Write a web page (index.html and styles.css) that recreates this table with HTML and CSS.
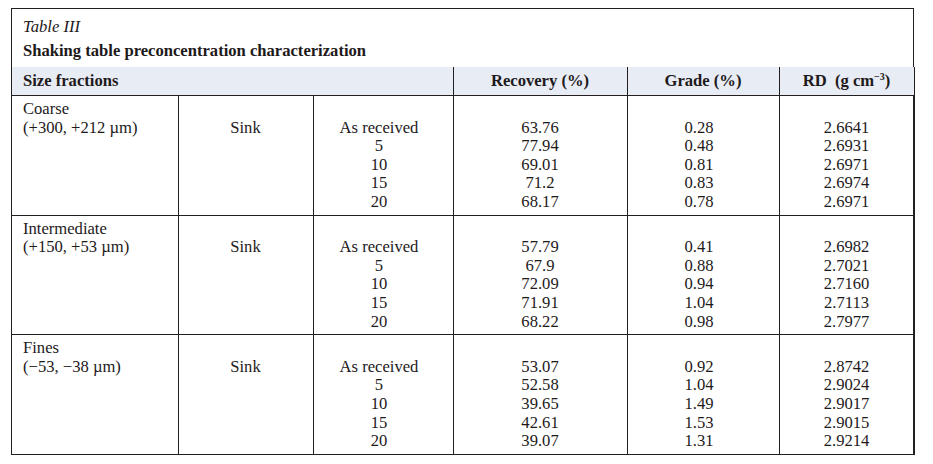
FILE: index.html
```html
<!DOCTYPE html>
<html>
<head>
<meta charset="utf-8">
<link rel="stylesheet" href="styles.css">
</head>
<body>
<div class="page">
  <div class="box">
    <div class="caption">
      <div class="label">Table III</div>
      <div class="title">Shaking table preconcentration characterization</div>
    </div>
    <table class="data">
      <colgroup>
        <col class="c1"><col class="c2"><col class="c3"><col class="c4"><col class="c5"><col class="c6">
      </colgroup>
      <thead>
        <tr>
          <th colspan="3" class="left">Size fractions</th>
          <th>Recovery (%)</th>
          <th>Grade (%)</th>
          <th>RD&nbsp; (g cm<sup>−3</sup>)</th>
        </tr>
      </thead>
      <tbody>
        <tr>
          <td class="left">Coarse<br>(+300, +212 µm)</td>
          <td><br>Sink</td>
          <td class="shift"><br>As received<br>5<br>10<br>15<br>20</td>
          <td><br>63.76<br>77.94<br>69.01<br>71.2<br>68.17</td>
          <td class="shift"><br>0.28<br>0.48<br>0.81<br>0.83<br>0.78</td>
          <td><br>2.6641<br>2.6931<br>2.6971<br>2.6974<br>2.6971</td>
        </tr>
        <tr>
          <td class="left">Intermediate<br>(+150, +53 µm)</td>
          <td><br>Sink</td>
          <td class="shift"><br>As received<br>5<br>10<br>15<br>20</td>
          <td><br>57.79<br>67.9<br>72.09<br>71.91<br>68.22</td>
          <td class="shift"><br>0.41<br>0.88<br>0.94<br>1.04<br>0.98</td>
          <td><br>2.6982<br>2.7021<br>2.7160<br>2.7113<br>2.7977</td>
        </tr>
        <tr>
          <td class="left">Fines<br>(−53, −38 µm)</td>
          <td><br>Sink</td>
          <td class="shift"><br>As received<br>5<br>10<br>15<br>20</td>
          <td><br>53.07<br>52.58<br>39.65<br>42.61<br>39.07</td>
          <td class="shift"><br>0.92<br>1.04<br>1.49<br>1.53<br>1.31</td>
          <td><br>2.8742<br>2.9024<br>2.9017<br>2.9015<br>2.9214</td>
        </tr>
      </tbody>
    </table>
  </div>
</div>
</body>
</html>
```

FILE: styles.css
```css
html, body {
  margin: 0;
  padding: 0;
  background: #ffffff;
}

body {
  font-family: "Liberation Serif", "Times New Roman", serif;
  color: #1e1a1b;
  font-size: 16.6px;
}

.page {
  padding: 8px 0 0 11px;
}

.box {
  width: 901px;
  border: 1px solid #231f20;
  border-bottom: none;
}

.caption {
  padding: 5px 0 0 11px;
  height: 53px;
}

.label {
  font-style: italic;
  line-height: 26px;
  height: 24px;
}

.title {
  font-weight: bold;
  line-height: 26px;
}

.data {
  width: 902px;
  margin-right: -1px;
  border-collapse: collapse;
  table-layout: fixed;
}

.c1 { width: 166px; }
.c2 { width: 135px; }
.c3 { width: 140px; }
.c4 { width: 174px; }
.c5 { width: 152px; }
.c6 { width: 135px; }

.data th {
  background: #e8ecf5;
  font-weight: bold;
  height: 28px;
  padding: 0;
  text-align: center;
  border-left: 1px solid #231f20;
  border-bottom: 1px solid #231f20;
  line-height: 28px;
}

.data th.left {
  text-align: left;
  padding-left: 11px;
  border-left: none;
}

.data th:last-child {
  border-right: 1px solid #231f20;
}

.data sup {
  font-size: 10px;
  line-height: 0;
  vertical-align: 6px;
}

.data td {
  vertical-align: top;
  text-align: center;
  line-height: 18.6px;
  padding: 4px 0 3px;
  border: 1px solid #231f20;
  border-top: none;
}

.data td.left {
  text-align: left;
  padding-left: 11px;
  border-left: none;
}

.data td.shift {
  padding-right: 8px;
}
```
